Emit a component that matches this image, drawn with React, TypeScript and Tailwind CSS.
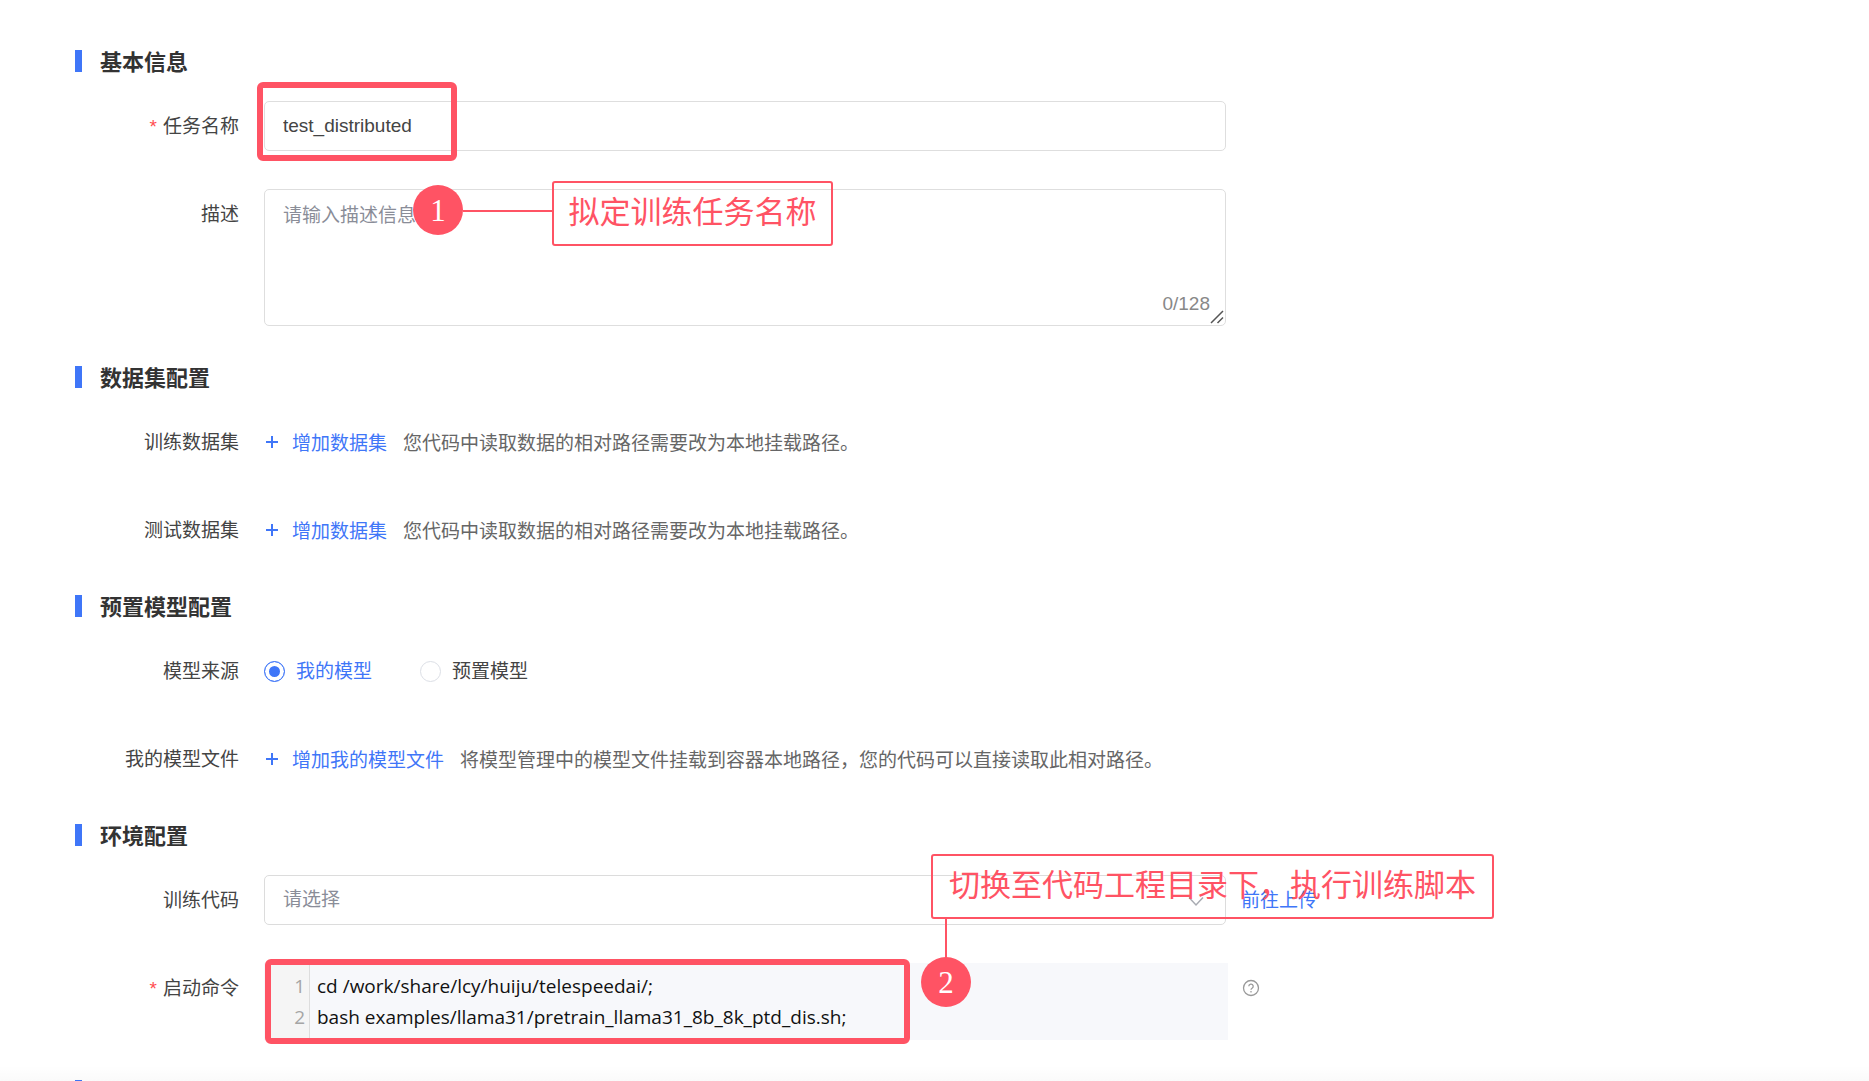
import React from "react";

function Section({ title, children }: { title: string; children?: React.ReactNode }) {
  return (
    <section className="mb-10">
      <h2 className="mb-[29px] flex h-[22px] items-center text-[22px] font-bold leading-[22px] text-[#333]">
        <span className="mr-[18px] h-full w-[7px] bg-[#3f76f8]" />
        <span className="pt-1">{title}</span>
      </h2>
      <div className="flex flex-col gap-[38px]">{children}</div>
    </section>
  );
}

function Row({
  label,
  htmlFor,
  required,
  children,
}: {
  label: string;
  htmlFor?: string;
  required?: boolean;
  children: React.ReactNode;
}) {
  const text = (
    <>
      {required && <span className="mr-[6px] text-[#ff4d4f]">*</span>}
      {label}
    </>
  );
  const cls = "w-[164px] shrink-0 text-right leading-[51px]";
  return (
    <div className="flex h-auto min-h-[50px] gap-[25px]">
      {htmlFor ? (
        <label htmlFor={htmlFor} className={`${cls} -mb-px`}>
          {text}
        </label>
      ) : (
        <span className={`${cls} -mb-px`}>{text}</span>
      )}
      {children}
    </div>
  );
}

function AddRow({ label, action, hint }: { label: string; action: string; hint: string }) {
  return (
    <Row label={label}>
      <div className="flex items-center">
        <button type="button" className="flex items-center text-[#3f76f8]">
          <svg className="ml-[1px] mr-[13px] size-[14px]" viewBox="0 0 14 14" aria-hidden="true">
            <path d="M7 1v12M1 7h12" stroke="currentColor" strokeWidth="2" />
          </svg>
          <span className="pt-1">{action}</span>
        </button>
        <span className="ml-4 pt-1 text-[#666]">{hint}</span>
      </div>
    </Row>
  );
}

function Source({ label, checked }: { label: string; checked?: boolean }) {
  return (
    <label className={checked ? "flex items-center gap-[11px] text-[#3f76f8]" : "flex items-center gap-[11px]"}>
      <input
        type="radio"
        name="model-source"
        defaultChecked={checked}
        className="size-[21px] appearance-none rounded-full border border-[#dcdfe6] bg-white checked:border-[#3f76f8] checked:bg-[#3f76f8] checked:shadow-[inset_0_0_0_4px_#fff]"
      />
      <span className="pt-[2px]">{label}</span>
    </label>
  );
}

const badge =
  "absolute flex size-[50px] items-center justify-center rounded-full bg-[#ff5364] font-['Liberation_Serif',serif] text-[31px] leading-none text-white";
const note =
  "absolute flex h-[65px] items-center justify-center whitespace-nowrap rounded-[3px] border-2 border-[#ff5364] text-[31px] text-[#ff5364]";

export default function App() {
  return (
    <main className="relative h-screen overflow-hidden bg-white pl-[75px] pt-[50px] font-['Liberation_Sans','Noto_Sans_CJK_SC',sans-serif] text-[19px] text-[#444]">
      <form>
        <Section title="基本信息">
          <Row label="任务名称" htmlFor="name" required>
            <div className="relative max-w-[962px] flex-1">
              <input
                id="name"
                defaultValue="test_distributed"
                className="h-[50px] w-full rounded-[5px] border border-[#dedede] px-[18px] text-[#444] outline-none"
              />
              <div className="pointer-events-none absolute -left-[7px] -top-[19px] h-[79px] w-[200px] rounded-[6px] border-[6px] border-[#ff5364]" />
            </div>
          </Row>
          <Row label="描述" htmlFor="desc">
            <div className="relative max-w-[962px] flex-1">
              <textarea
                id="desc"
                placeholder="请输入描述信息"
                className="block h-[137px] w-full resize-none rounded-[5px] border border-[#dedede] px-[18px] py-3 leading-7 outline-none placeholder:text-[#8a8d98]"
              />
              <span className="absolute bottom-2 right-4 leading-7 text-[#888]">0/128</span>
              <svg className="absolute bottom-[2px] right-[2px] size-[14px]" viewBox="0 0 14 14" aria-hidden="true">
                <path d="M1 13L13 1M7.500 13L13 7.500" stroke="#555" strokeWidth="1.500" />
              </svg>
              <span className={`${badge} -top-1 left-[149px]`}>1</span>
              <span className="absolute left-[199px] top-[21px] h-[2px] w-[90px] bg-[#ff5364]" />
              <span className={`${note} -top-2 left-[288px] w-[281px]`}>拟定训练任务名称</span>
            </div>
          </Row>
        </Section>

        <Section title="数据集配置">
          <AddRow label="训练数据集" action="增加数据集" hint="您代码中读取数据的相对路径需要改为本地挂载路径。" />
          <AddRow label="测试数据集" action="增加数据集" hint="您代码中读取数据的相对路径需要改为本地挂载路径。" />
        </Section>

        <Section title="预置模型配置">
          <Row label="模型来源">
            <div className="flex items-center gap-12">
              <Source label="我的模型" checked />
              <Source label="预置模型" />
            </div>
          </Row>
          <AddRow
            label="我的模型文件"
            action="增加我的模型文件"
            hint="将模型管理中的模型文件挂载到容器本地路径，您的代码可以直接读取此相对路径。"
          />
        </Section>

        <Section title="环境配置">
          <Row label="训练代码" htmlFor="code">
            <div className="relative max-w-[962px] flex-1">
              <select
                id="code"
                className="h-[50px] w-full appearance-none rounded-[5px] border border-[#dcdcdc] bg-white px-[18px] text-[#8a8d98] outline-none"
              >
                <option>请选择</option>
              </select>
              <svg
                className="pointer-events-none absolute right-[22px] top-[18px] size-4"
                viewBox="0 0 16 16"
                fill="none"
                aria-hidden="true"
              >
                <path d="M1 4.500L8 12L15 4.500" stroke="#a8abb2" strokeWidth="1.500" />
              </svg>
              <span className={`${note} -top-[21px] left-[667px] w-[563px]`}>切换至代码工程目录下，执行训练脚本</span>
            </div>
            <a href="#upload" className="-ml-[10px] -mb-px leading-[51px] text-[#3f76f8]">
              前往上传
            </a>
          </Row>
          <Row label="启动命令" required>
            <div className="relative flex h-[77px] max-w-[964px] flex-1 bg-[#f7f8fb] font-['Open_Sans',sans-serif] leading-[31px]">
              <ol className="ml-[1px] w-[45px] border-r border-[#ddd] bg-[#f5f5f5] pr-1 pt-2 text-right text-[#a5a5a5]">
                <li>1</li>
                <li>2</li>
              </ol>
              <pre className="pl-[7px] pt-2 font-['Open_Sans',sans-serif] text-[#111]">
                {"cd /work/share/lcy/huiju/telespeedai/;\nbash examples/llama31/pretrain_llama31_8b_8k_ptd_dis.sh;"}
              </pre>
              <div className="pointer-events-none absolute -top-1 left-[1px] h-[85px] w-[645px] rounded-[6px] border-[6px] border-[#ff5364]" />
              <span className="absolute -top-11 left-[681px] h-[40px] w-[2px] bg-[#ff5364]" />
              <span className={`${badge} -top-[6px] left-[657px]`}>2</span>
            </div>
            <button type="button" aria-label="帮助" className="-ml-[11px] h-[50px] text-[#999]">
              <svg className="size-[18px]" viewBox="0 0 18 18" fill="none" stroke="currentColor" aria-hidden="true">
                <circle cx="9" cy="9" r="7.500" strokeWidth="1.300" />
                <path d="M6.800 7.300a2.200 2.200 0 1 1 3.300 1.900c-.8.5-1.100.8-1.100 1.600" strokeWidth="1.300" />
                <circle cx="9" cy="12.800" r=".5" fill="currentColor" strokeWidth=".6" />
              </svg>
            </button>
          </Row>
        </Section>
        <Section title="" />
      </form>
      <div className="pointer-events-none absolute inset-x-0 bottom-0 h-4 bg-gradient-to-b from-black/0 to-black/[0.02]" />
    </main>
  );
}
